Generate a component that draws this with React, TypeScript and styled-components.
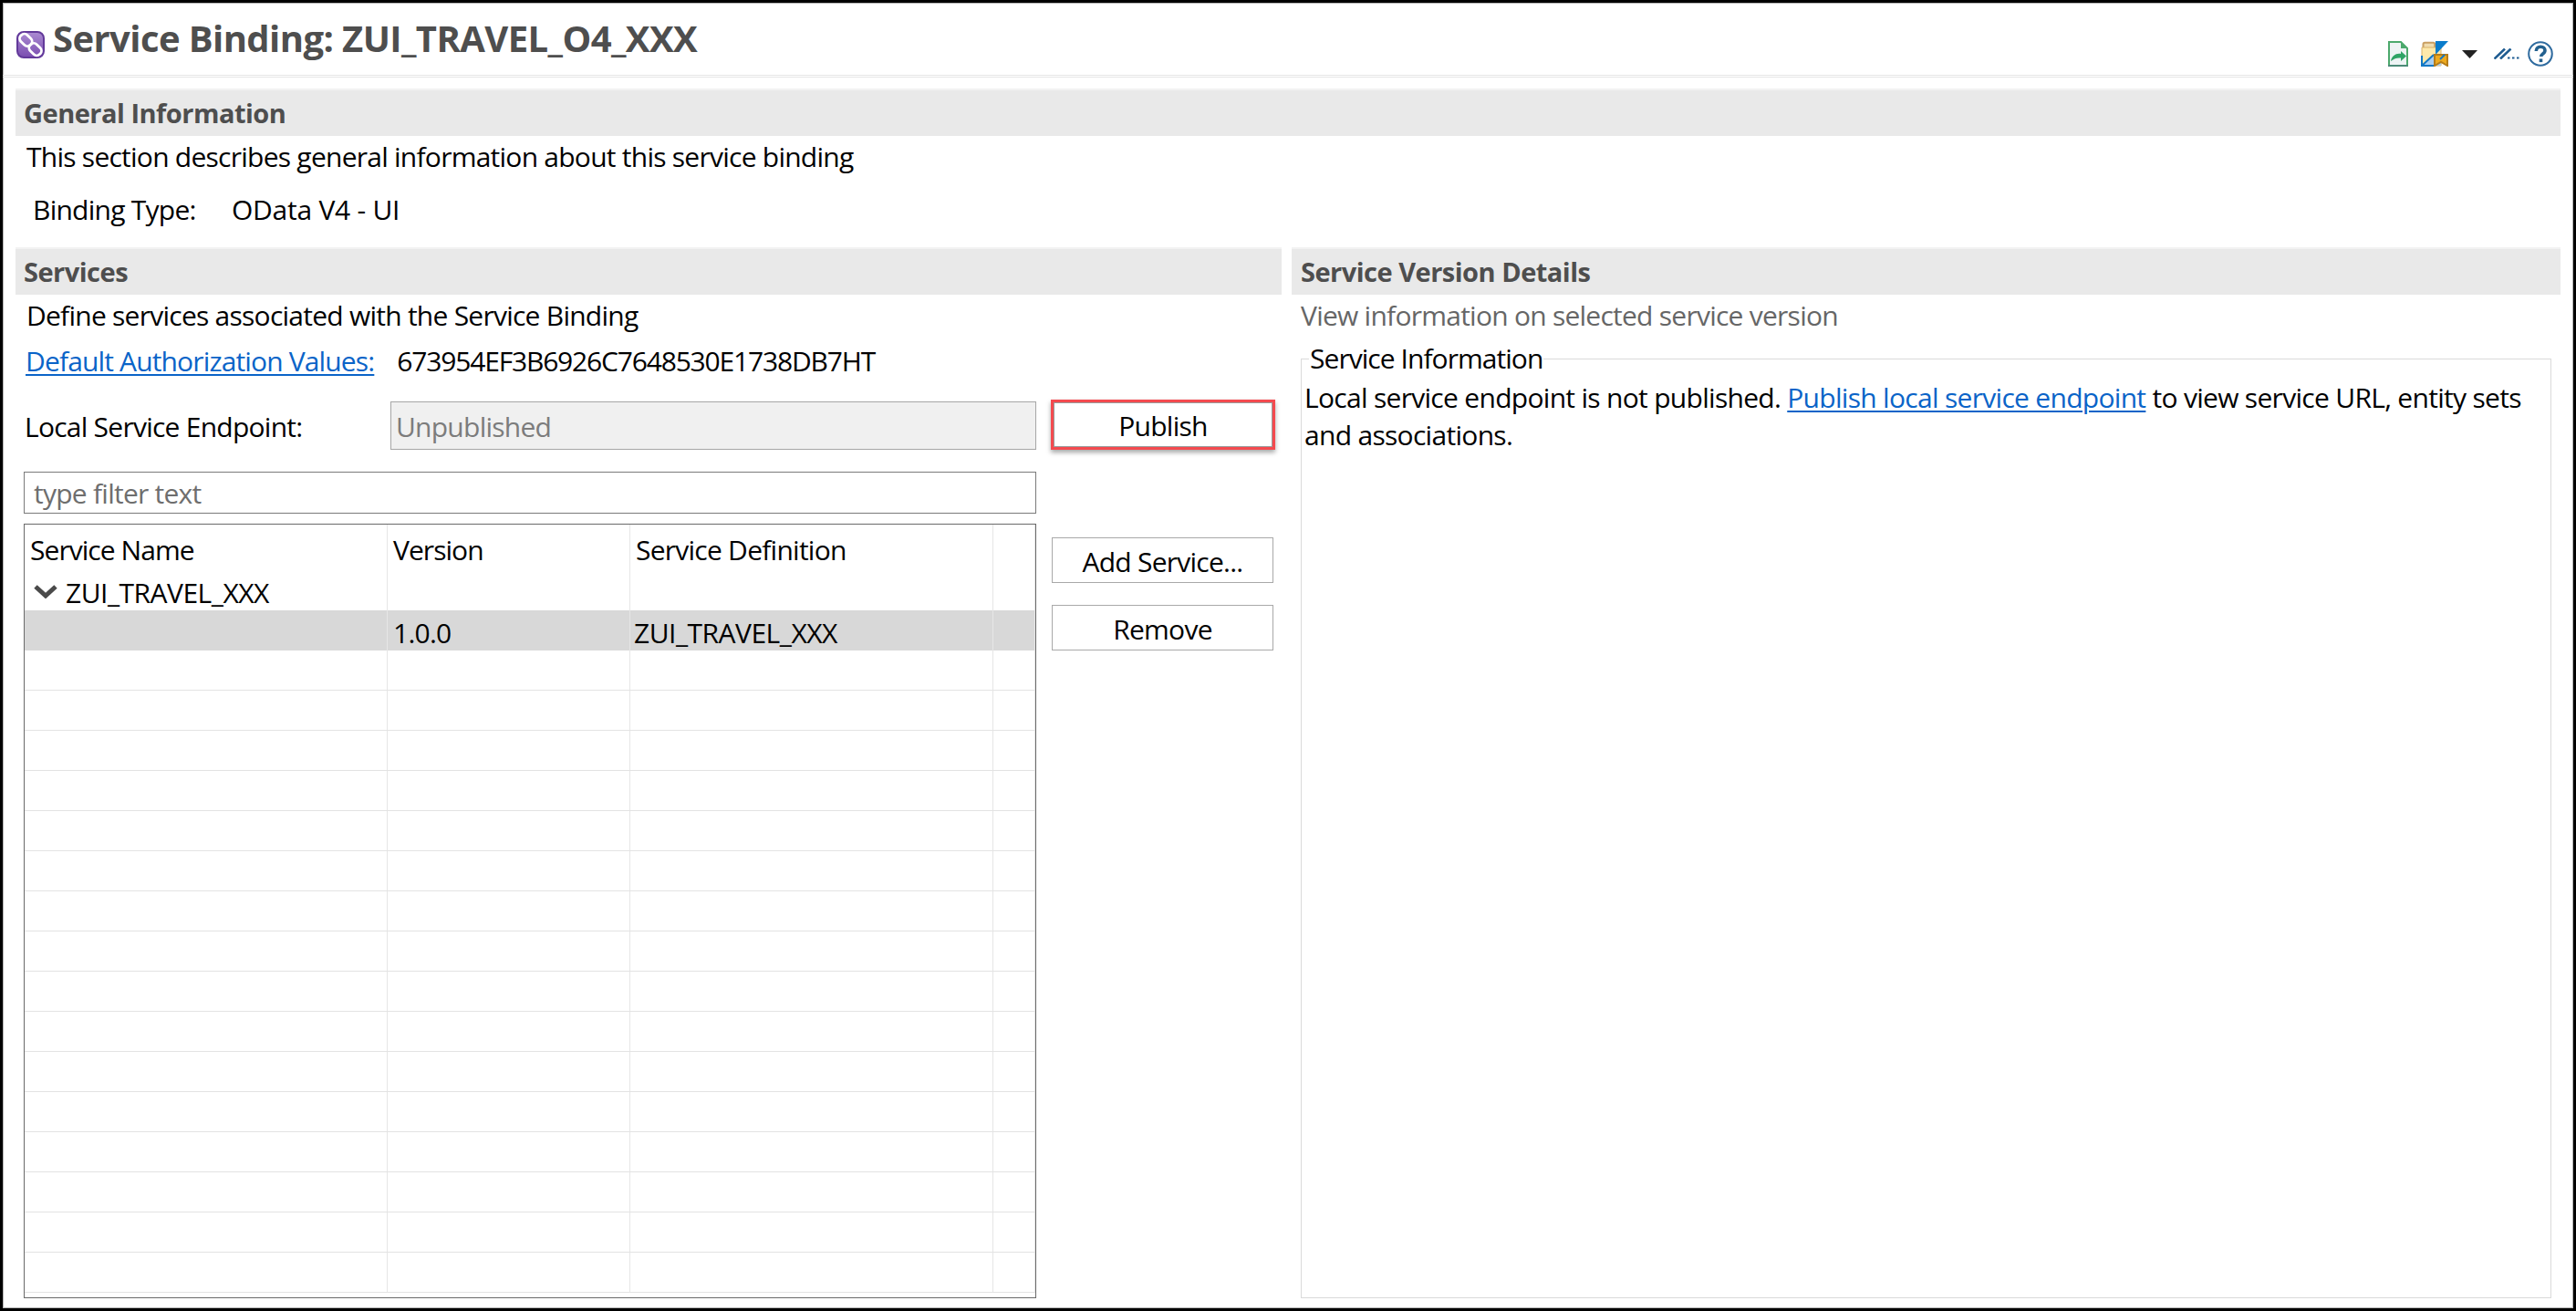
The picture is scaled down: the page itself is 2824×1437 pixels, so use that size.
import React from "react";
import styled, { createGlobalStyle } from "styled-components";

const Global = createGlobalStyle`
  html, body { margin: 0; padding: 0; background: #fff; }
  * { box-sizing: border-box; }
`;

const FONT = `"Open Sans", "Noto Sans", "Liberation Sans", sans-serif`;

const Page = styled.div`
  width: 2824px;
  height: 1437px;
  overflow: hidden;
  border: 3px solid #000;
  box-shadow: inset 0 0 0 1px #b4b4b4;
  background: #fff;
  font-family: ${FONT};
  font-size: 30px;
  letter-spacing: -0.75px;
  color: #000;
  white-space: nowrap;
`;

const Header = styled.header`
  height: 82px;
  padding: 0 22px 0 15px;
  display: flex;
  justify-content: space-between;
  border-bottom: 3px double #e6e6e6;
`;

const TitleGroup = styled.div`
  display: flex;
  align-items: flex-start;
  gap: 9px;
`;

const TitleIcon = styled.svg`
  width: 31px;
  height: 30px;
  margin-top: 31px;
`;

const Title = styled.h1`
  margin: 13px 0 0;
  font-size: 40px;
  line-height: 52px;
  font-weight: 700;
  letter-spacing: -0.58px;
  color: #4e4e4e;
`;

const Toolbar = styled.div`
  display: flex;
  align-items: center;
  height: 28px;
  margin-top: 42px;
`;

const ToolIcon = styled.svg<{ $left: number }>`
  margin-left: ${(p) => p.$left}px;
  flex: none;
`;

const Body = styled.main`
  padding: 12px 14px 0 14px;
`;

const SectionTitle = styled.h2<{ $inset?: number }>`
  margin: 0;
  height: 52px;
  padding: 0 ${(p) => p.$inset ?? 9}px;
  border-top: 2px solid #f2f2f2;
  background: #e9e9e9;
  background-clip: padding-box;
  font-size: 29px;
  line-height: 49px;
  font-weight: 700;
  letter-spacing: -0.5px;
  color: #4e4e4e;
`;

const Description = styled.p<{ $muted?: boolean }>`
  margin: 0;
  padding-left: ${(p) => (p.$muted ? 10 : 12)}px;
  height: 48px;
  line-height: 46px;
  color: ${(p) => (p.$muted ? "#666" : "#000")};
`;

const BindingRow = styled.div`
  display: flex;
  height: 44px;
  line-height: 44px;
  margin: 11px 0 19px;
  padding-left: 19px;
`;

const BindingLabel = styled.span`
  width: 218px;
`;

const BindingValue = styled.span`
  letter-spacing: -0.25px;
`;

const Columns = styled.div`
  display: grid;
  grid-template-columns: 1388px 1391px;
  column-gap: 11px;
`;

const Pane = styled.section`
  min-width: 0;
`;

const Form = styled.div`
  display: grid;
  grid-template-columns: 1110px 246px;
  column-gap: 16px;
  padding-left: 9px;
`;

const AuthRow = styled.div`
  grid-column: 1 / 3;
  display: flex;
  height: 44px;
  line-height: 43px;
  margin-top: 3px;
  padding-left: 2px;
`;

const DocLink = styled.a`
  color: #0a64c8;
  text-decoration: underline;
  text-underline-offset: 3px;
  text-decoration-thickness: 2px;
`;

const AuthLink = styled(DocLink)`
  letter-spacing: -0.85px;
`;

const AuthValue = styled.span`
  margin-left: 25px;
  letter-spacing: -1.18px;
`;

const EndpointRow = styled.div`
  display: flex;
  align-items: center;
  height: 55px;
  margin-top: 20px;
`;

const EndpointLabel = styled.span`
  width: 402px;
  padding: 3px 0 0 1px;
`;

const EndpointBox = styled.div`
  width: 708px;
  height: 53px;
  margin-top: 2px;
  padding-left: 5px;
  line-height: 53px;
  background: #f0f0f0;
  border: 1px solid #a6a6a6;
  color: #7c7c7c;
`;

const PushButton = styled.button<{ $highlight?: boolean }>`
  display: block;
  width: ${(p) => (p.$highlight ? 246 : 243)}px;
  height: ${(p) => (p.$highlight ? 55 : 50)}px;
  margin: ${(p) => (p.$highlight ? "20px 0 0" : "0 0 0 1px")};
  padding: ${(p) => (p.$highlight ? "1px 0 0" : "2px 0 0")};
  background: #fff;
  border: ${(p) => (p.$highlight ? "3px solid #f44a4f" : "1px solid #a9a9a9")};
  box-shadow: ${(p) =>
    p.$highlight ? "0 3px 5px rgba(0,0,0,.35), inset 0 0 0 1px #9a9a9a" : "none"};
  font: inherit;
  letter-spacing: inherit;
  color: #000;
`;

const FilterInput = styled.div`
  grid-column: 1;
  height: 46px;
  margin-top: 24px;
  padding-left: 10px;
  line-height: 45px;
  border: 1px solid #7a7a7a;
  color: #6e6e6e;
`;

const Table = styled.div`
  height: 849px;
  margin-top: 11px;
  border: 1px solid #6a6a6a;
  overflow: hidden;
`;

const ButtonColumn = styled.div`
  margin-top: 26px;
  display: flex;
  flex-direction: column;
  gap: 24px;
`;

const Row = styled.div<{ $h: number; $selected?: boolean; $line?: boolean }>`
  display: grid;
  grid-template-columns: 398px 266px 398px 1fr;
  height: ${(p) => p.$h}px;
  line-height: 40px;
  background: ${(p) => (p.$selected ? "#d8d8d8" : "#fff")};
  border-bottom: ${(p) => (p.$line ? "1px solid #e3e3e3" : "none")};
`;

const Cell = styled.div<{ $pad?: number }>`
  padding: 5px 0 0 ${(p) => p.$pad ?? 0}px;
  border-right: 1px solid #e6e6e6;
  display: flex;
  align-items: center;
  min-width: 0;
`;

const ServiceToken = styled.span`
  letter-spacing: -0.5px;
`;

const HeaderName = styled.span`
  letter-spacing: -0.95px;
`;

const Twisty = styled.svg`
  width: 26px;
  height: 16px;
  margin: -5px 9px 0 0;
  flex: none;
`;

const GroupBox = styled.fieldset`
  margin: 0 0 0 10px;
  padding: 0 0 0 3px;
  width: 1371px;
  height: 1052px;
  border: 1px solid #dadada;
`;

const GroupLegend = styled.legend`
  margin-left: 5px;
  padding: 0 1px;
  line-height: 44px;
  letter-spacing: -0.95px;
`;

const GroupText = styled.p`
  margin: 0;
  line-height: 41px;
  letter-spacing: -0.7px;
  white-space: normal;
  width: 1345px;
`;

const LinkIcon = () => (
  <TitleIcon viewBox="0 0 31 30">
    <defs>
      <linearGradient id="pur" x1="0" y1="0" x2="0" y2="1">
        <stop offset="0" stopColor="#ab8bd2" />
        <stop offset="1" stopColor="#7a4db0" />
      </linearGradient>
    </defs>
    <rect x="1" y="1" width="29" height="28" rx="7" fill="url(#pur)" stroke="#62399a" strokeWidth="2" />
    <g fill="none" stroke="#fff" strokeWidth="2.8" transform="rotate(-45 15.5 15)">
      <rect x="10.5" y="0.5" width="10" height="14.5" rx="4.5" />
      <rect x="10.5" y="15" width="10" height="14.5" rx="4.5" />
    </g>
  </TitleIcon>
);

const FileIcon = () => (
  <ToolIcon $left={0} width="22" height="28" viewBox="0 0 22 28">
    <path d="M1 1h13l7 7v19H1z" fill="#edf3f4" stroke="#4ca96c" strokeWidth="2" />
    <path d="M14 1v7h7z" fill="#4ca96c" />
    <path d="M0 27h22" stroke="#4c8a78" strokeWidth="2" />
    <path d="M3 22c1-6 6-9 11-8v-3l6 5.500-6 5.500v-3.500c-4-.5-7 .5-11 3.500z" fill="#2fa466" />
  </ToolIcon>
);

const FolderIcon = () => (
  <ToolIcon $left={14} width="30" height="28" viewBox="0 0 30 28">
    <path d="M2.500 7V3.500c0-1 .7-1.700 1.700-1.700h9.300c1 0 1.700.7 1.700 1.700V7" fill="#f0dcae" stroke="#c99f63" strokeWidth="2" />
    <path d="M1 7h21v20H1z" fill="#fde9ab" stroke="#d9b26b" strokeWidth="1" />
    <path d="M1 27l13-12h8v12z" fill="#a9cff2" />
    <path d="M1 27l13-12" stroke="#1277c5" strokeWidth="2" />
    <path d="M1 16v11h13" fill="none" stroke="#1277c5" strokeWidth="2" />
    <path d="M16 0h14L16 15z" fill="#0a7ccb" />
    <path d="M15 15h14v12l-7-4-7 4z" fill="#eeaa1e" stroke="#b47c1a" strokeWidth="2" />
    <path d="M21 20l5-5" stroke="#1277c5" strokeWidth="2" />
  </ToolIcon>
);

const DropArrow = () => (
  <ToolIcon $left={15} width="17" height="9" viewBox="0 0 17 9">
    <path d="M0 0h17L8.500 9z" fill="#222" />
  </ToolIcon>
);

const SlashesIcon = () => (
  <ToolIcon $left={18} width="29" height="12" viewBox="0 0 29 12">
    <path d="M0.500 11.500L12 0.500M7 11.500L18.500 0.500" stroke="#1f5c91" strokeWidth="2.600" fill="none" />
    <path d="M15 10.500h2.500M20 10.500h2.500M25 10.500h2.500" stroke="#1f5c91" strokeWidth="2" fill="none" />
  </ToolIcon>
);

const HelpIcon = () => (
  <ToolIcon $left={8} width="28" height="28" viewBox="0 0 28 28">
    <circle cx="14" cy="14" r="12.800" fill="#fff" stroke="#2f6b9f" strokeWidth="2" />
    <path d="M9.300 11c0-3 2-4.800 4.900-4.800s4.800 1.600 4.800 4c0 2-1.100 3-2.600 4-1.200.8-1.700 1.300-1.700 2.800" fill="none" stroke="#24618f" strokeWidth="3.600" />
    <rect x="12.700" y="19.500" width="3.600" height="3.600" fill="#24618f" />
  </ToolIcon>
);

const emptyRows = Array.from({ length: 16 }, (_, i) => i);

export default function App() {
  return (
    <>
      <Global />
      <Page>
        <Header>
          <TitleGroup>
            <LinkIcon />
            <Title>Service Binding: ZUI_TRAVEL_O4_XXX</Title>
          </TitleGroup>
          <Toolbar>
            <FileIcon />
            <FolderIcon />
            <DropArrow />
            <SlashesIcon />
            <HelpIcon />
          </Toolbar>
        </Header>
        <Body>
          <SectionTitle>General Information</SectionTitle>
          <Description>This section describes general information about this service binding</Description>
          <BindingRow>
            <BindingLabel>Binding Type:</BindingLabel>
            <BindingValue>OData V4 - UI</BindingValue>
          </BindingRow>
          <Columns>
            <Pane>
              <SectionTitle>Services</SectionTitle>
              <Description>Define services associated with the Service Binding</Description>
              <Form>
                <AuthRow>
                  <AuthLink>Default Authorization Values:</AuthLink>
                  <AuthValue>673954EF3B6926C7648530E1738DB7HT</AuthValue>
                </AuthRow>
                <EndpointRow>
                  <EndpointLabel>Local Service Endpoint:</EndpointLabel>
                  <EndpointBox>Unpublished</EndpointBox>
                </EndpointRow>
                <PushButton $highlight>Publish</PushButton>
                <FilterInput>type filter text</FilterInput>
                <div />
                <Table>
                  <Row $h={50}>
                    <Cell $pad={6}><HeaderName>Service Name</HeaderName></Cell>
                    <Cell $pad={6}><HeaderName>Version</HeaderName></Cell>
                    <Cell $pad={6}>Service Definition</Cell>
                    <Cell />
                  </Row>
                  <Row $h={44}>
                    <Cell $pad={10}>
                      <Twisty viewBox="0 0 26 16">
                        <path d="M2 3l11 10L24 3" fill="none" stroke="#4a4a4a" strokeWidth="5" />
                      </Twisty>
                      <ServiceToken>ZUI_TRAVEL_XXX</ServiceToken>
                    </Cell>
                    <Cell />
                    <Cell />
                    <Cell />
                  </Row>
                  <Row $h={44} $selected>
                    <Cell />
                    <Cell $pad={6}>1.0.0</Cell>
                    <Cell $pad={4}><ServiceToken>ZUI_TRAVEL_XXX</ServiceToken></Cell>
                    <Cell />
                  </Row>
                  {emptyRows.map((i) => (
                    <Row key={i} $h={44} $line>
                      <Cell />
                      <Cell />
                      <Cell />
                      <Cell />
                    </Row>
                  ))}
                </Table>
                <ButtonColumn>
                  <PushButton>Add Service...</PushButton>
                  <PushButton>Remove</PushButton>
                </ButtonColumn>
              </Form>
            </Pane>
            <Pane>
              <SectionTitle $inset={10}>Service Version Details</SectionTitle>
              <Description $muted>View information on selected service version</Description>
              <GroupBox>
                <GroupLegend>Service Information</GroupLegend>
                <GroupText>
                  Local service endpoint is not published. <DocLink>Publish local service endpoint</DocLink> to view service URL, entity sets and associations.
                </GroupText>
              </GroupBox>
            </Pane>
          </Columns>
        </Body>
      </Page>
    </>
  );
}
